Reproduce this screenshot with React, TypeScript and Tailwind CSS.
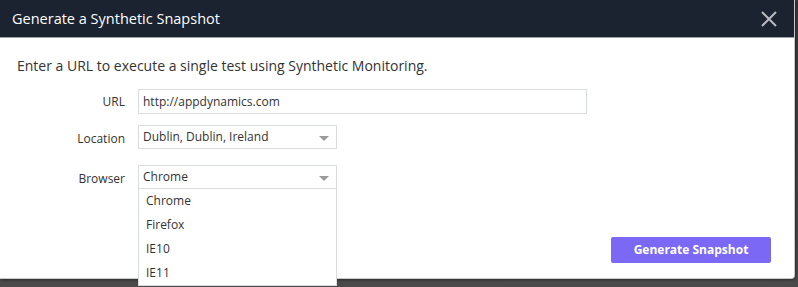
const options = ["Chrome", "Firefox", "IE10", "IE11"];

function Caret() {
  return (
    <svg width="10" height="6" viewBox="0 0 10 6" className="absolute right-[7px] top-[10px]">
      <path d="M0 0 L10 0 L5 5 Z" fill="#9a9a9a" />
    </svg>
  );
}

export default function App() {
  return (
    <div className="relative w-[798px] h-[287px] overflow-hidden bg-gradient-to-b from-[#3a3a3a] to-[#4a4a4a] font-['Open_Sans',sans-serif]">
      <div className="w-[795px] h-[279px] bg-white flex flex-col border-r border-b border-[#c9c9c9] rounded-br-[4px] shadow-[1px_1px_3px_rgba(0,0,0,0.4)]">
        {/* Header */}
        <div className="h-[38px] bg-[#1b2230] border-b border-[#9aa0a8] flex items-center justify-between pl-[12px] pr-[17px]">
          <h1 className="text-[14.5px] text-white font-normal">Generate a Synthetic Snapshot</h1>
          <svg width="16" height="16" viewBox="0 0 16 16">
            <path d="M1 1 L15 15 M15 1 L1 15" stroke="#b8bbc0" strokeWidth="2" />
          </svg>
        </div>

        {/* Body */}
        <div className="flex-1 pl-[17px] pr-[23px] pt-[18px]">
          <p className="text-[14px] text-[#333] leading-[20px]">
            Enter a URL to execute a single test using Synthetic Monitoring.
          </p>

          <div className="mt-[13px] flex items-center">
            <label className="w-[108px] text-right text-[12px] text-[#333]">URL</label>
            <div className="ml-[13px] w-[449px] h-[25px] border border-[#d8dcdf] flex items-center pl-[4px] text-[12px] text-[#333]">
              http://appdynamics.com
            </div>
          </div>

          <div className="mt-[11px] flex items-center">
            <label className="w-[108px] text-right text-[12px] text-[#333] pt-[4px]">Location</label>
            <div className="relative ml-[13px] w-[199px] h-[24px] border border-[#d8dcdf] flex items-center pl-[4px] text-[12px] text-[#333]">
              Dublin, Dublin, Ireland
              <Caret />
            </div>
          </div>

          <div className="mt-[16px] flex items-center">
            <label className="w-[108px] text-right text-[12px] text-[#333] pt-[4px]">Browser</label>
            <div className="relative ml-[13px] w-[199px] h-[24px] border border-[#d8dcdf] flex items-center pl-[4px] text-[12px] text-[#333]">
              Chrome
              <Caret />
            </div>
          </div>

          <div className="flex justify-end mt-[48px]">
            <button className="w-[160px] h-[26px] bg-[#7b68f5] rounded-[2px] text-white text-[12px] font-bold">
              Generate Snapshot
            </button>
          </div>
        </div>
      </div>

      {/* Open browser dropdown */}
      <ul className="absolute left-[138px] top-[189px] w-[199px] h-[97px] bg-white border border-[#d8dcdf] border-t-0 text-[12px] text-[#333]">
        {options.map((o) => (
          <li key={o} className="h-[24px] flex items-center pl-[7px]">
            {o}
          </li>
        ))}
      </ul>
    </div>
  );
}
